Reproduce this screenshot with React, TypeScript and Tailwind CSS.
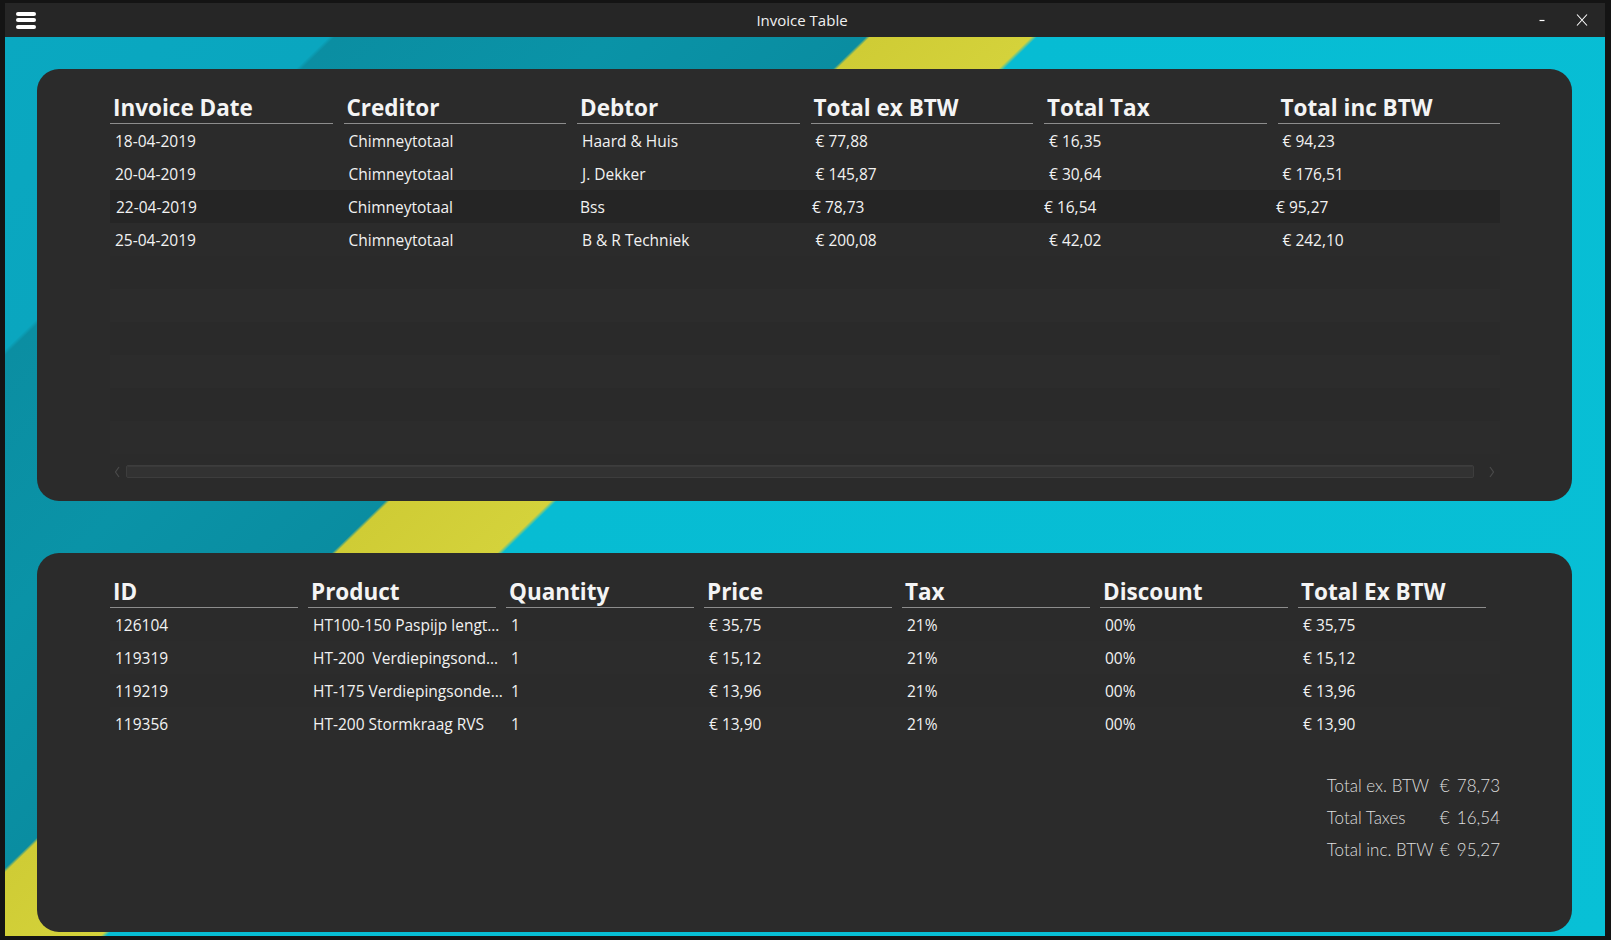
import React from 'react';

const invoices = [
  ['18-04-2019', 'Chimneytotaal', 'Haard & Huis', '€ 77,88', '€ 16,35', '€ 94,23'],
  ['20-04-2019', 'Chimneytotaal', 'J. Dekker', '€ 145,87', '€ 30,64', '€ 176,51'],
  ['22-04-2019', 'Chimneytotaal', 'Bss', '€ 78,73', '€ 16,54', '€ 95,27'],
  ['25-04-2019', 'Chimneytotaal', 'B & R Techniek', '€ 200,08', '€ 42,02', '€ 242,10'],
];

const lines = [
  ['126104', 'HT100-150 Paspijp lengt…', '1', '€ 35,75', '21%', '00%', '€ 35,75'],
  ['119319', 'HT-200  Verdiepingsond…', '1', '€ 15,12', '21%', '00%', '€ 15,12'],
  ['119219', 'HT-175 Verdiepingsonde…', '1', '€ 13,96', '21%', '00%', '€ 13,96'],
  ['119356', 'HT-200 Stormkraag RVS', '1', '€ 13,90', '21%', '00%', '€ 13,90'],
];

const totals = [
  ['Total ex. BTW', '78,73'],
  ['Total Taxes', '16,54'],
  ['Total inc. BTW', '95,27'],
];

const HeaderCell: React.FC<{ label: string }> = ({ label }) => (
  <div className="flex h-[35px] items-end border-b border-[#8d8d8d] pb-[1px] pl-[3px] text-[22.5px] font-bold leading-[28px] text-[#f4f4f4]">
    {label}
  </div>
);

const Cell: React.FC<{ text: string }> = ({ text }) => (
  <div className="pl-[5px] pt-[1px] text-[15.5px] leading-[32px] text-[#f2f2f2] whitespace-pre">{text}</div>
);

const InvoiceTable: React.FC = () => (
  <div className="w-[1390px]">
    <div className="grid grid-cols-6 gap-x-[11px]">
      {['Invoice Date', 'Creditor', 'Debtor', 'Total ex BTW', 'Total Tax', 'Total inc BTW'].map((h) => (
        <HeaderCell key={h} label={h} />
      ))}
    </div>
    <div className="flex flex-col">
      {invoices.map((row, i) =>
        i === 2 ? (
          <div key={i} className="grid h-[33px] grid-cols-[repeat(6,223px)] gap-x-[9px] bg-[#252525] pl-[1px]">
            {row.map((c, j) => (
              <Cell key={j} text={c} />
            ))}
          </div>
        ) : (
          <div key={i} className="grid h-[33px] grid-cols-6 gap-x-[11px]">
            {row.map((c, j) => (
              <Cell key={j} text={c} />
            ))}
          </div>
        )
      )}
      {[0, 1, 2, 3, 4, 5].map((k) => (
        <div key={k} className={`h-[33px] ${k % 2 === 1 ? 'bg-[#2c2c2c]' : 'bg-[#2a2a2a]'}`} />
      ))}
    </div>

    {/* horizontal scrollbar */}
    <div className="mt-[11px] flex h-[13px] items-center">
      <div className="flex w-[16px] items-center">
        <svg width="8" height="12" viewBox="0 0 8 12" className="ml-[4px]">
          <path d="M5 1 L1.5 6 L5 11" fill="none" stroke="#4a4a4a" strokeWidth="1.2" />
        </svg>
      </div>
      <div className="h-[13px] flex-1 rounded-[2px] border border-[#3d3d3d] bg-[#323232] shadow-[inset_0_1px_0_#3a3a3a]" />
      <div className="flex w-[26px] items-center justify-end">
        <svg width="8" height="12" viewBox="0 0 8 12" className="mr-[5px]">
          <path d="M3 1 L6.5 6 L3 11" fill="none" stroke="#4a4a4a" strokeWidth="1.2" />
        </svg>
      </div>
    </div>
  </div>
);

const LinesTable: React.FC = () => (
  <div className="w-[1376px]">
    <div className="grid grid-cols-7 gap-x-[10px]">
      {['ID', 'Product', 'Quantity', 'Price', 'Tax', 'Discount', 'Total Ex BTW'].map((h) => (
        <HeaderCell key={h} label={h} />
      ))}
    </div>
    <div className="flex w-[1390px] flex-col">
      {lines.map((row, i) => (
        <div key={i} className={`grid h-[33px] grid-cols-[repeat(7,188px)] gap-x-[10px] ${i % 2 === 1 ? 'bg-[#2c2c2c]' : ''}`}>
          {row.map((c, j) => (
            <Cell key={j} text={c} />
          ))}
        </div>
      ))}
    </div>
  </div>
);

export default function App() {
  return (
    <div className="h-[940px] w-[1611px] overflow-hidden bg-[#141414] pl-[5px] pt-[3px] font-['Open_Sans',sans-serif]">
      <div className="flex h-[933px] w-[1600px] flex-col">
        {/* title bar */}
        <div className="flex h-[34px] shrink-0 items-center bg-[#262626]">
          <div className="w-[97px] pl-[11px]">
            <div className="flex w-[20px] flex-col gap-[2.5px]">
              <div className="h-[4px] rounded-full bg-white" />
              <div className="h-[4px] rounded-full bg-white" />
              <div className="h-[4px] rounded-full bg-white" />
            </div>
          </div>
          <div className="flex-1 text-center text-[15px] text-[#f0f0f0]">Invoice Table</div>
          <div className="flex w-[103px] items-center justify-end gap-[30px] pr-[17px]">
            <svg width="8" height="3" viewBox="0 0 8 3">
              <path d="M1.5 1.5 H6.5" stroke="#fff" strokeWidth="1.2" />
            </svg>
            <svg width="12" height="12" viewBox="0 0 12 12">
              <path d="M1 0.5 L11 11.5 M11 0.5 L1 11.5" stroke="#fff" strokeWidth="1.1" />
            </svg>
          </div>
        </div>

        {/* content with wallpaper */}
        <div className="flex-1 bg-[linear-gradient(136deg,#0aa8c1_0px,#0aa6bf_225px,#0b8ea2_229px,#0a93a7_420px,#0a8da1_598px,#cfcc35_601px,#d4d23b_713px,#07bcd3_717px,#08c0d6_100%)] pl-[32px] pr-[33px] pt-[32px]">
          <div className="h-[432px] rounded-[22px] bg-[#2b2b2b] pl-[73px] pt-[20px]">
            <InvoiceTable />
          </div>

          <div className="mt-[52px] flex h-[379px] flex-col rounded-[22px] bg-[#2b2b2b] pl-[73px] pr-[72px] pt-[20px]">
            <LinesTable />
            <div className="mt-[30px] grid grid-cols-[113px_17px_auto] self-end font-['Lato',sans-serif] text-[17px] font-light leading-[32px] text-[#dedede]">
              {totals.map(([label, value]) => (
                <React.Fragment key={label}>
                  <div>{label}</div>
                  <div>€</div>
                  <div>{value}</div>
                </React.Fragment>
              ))}
            </div>
          </div>
        </div>
      </div>
    </div>
  );
}
